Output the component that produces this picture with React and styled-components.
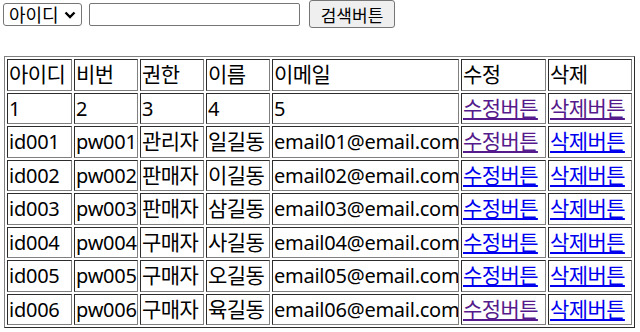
import styled, { createGlobalStyle } from 'styled-components';

const GlobalStyle = createGlobalStyle`
  html, body {
    margin: 0;
    padding: 0;
    background: #fff;
  }
  body {
    font-family: "Noto Sans", "Noto Sans CJK KR", sans-serif;
    color: #000;
  }
`;

const Page = styled.div`
  padding: 0 0 0 3px;
`;

const SearchBar = styled.form`
  display: flex;
  align-items: center;
  height: 28px;
  margin: 0;
`;

const SelectBox = styled.div`
  position: relative;
  width: 79px;
  height: 23px;
  margin: 1px 7px 0 0;
`;

const Select = styled.select`
  appearance: none;
  box-sizing: border-box;
  width: 100%;
  height: 100%;
  margin: 0;
  padding: 0 0 0 5px;
  font-family: "Noto Sans CJK KR", sans-serif;
  font-size: 18px;
  line-height: 21px;
  border: 1px solid #767676;
  border-radius: 3px;
  background: #fff;
  color: #000;
`;

const Chevron = styled.svg`
  position: absolute;
  right: 6px;
  top: 8px;
  pointer-events: none;
`;

const Input = styled.input`
  box-sizing: border-box;
  width: 211px;
  height: 23px;
  margin: 1px 9px 0 0;
  padding: 1px 3px;
  font-size: 16.5px;
  border: 1px solid #767676;
  border-radius: 2px;
`;

const Button = styled.button`
  box-sizing: border-box;
  width: 86px;
  height: 28px;
  padding: 0;
  font-family: "Noto Sans CJK KR", sans-serif;
  font-size: 17px;
  color: #000;
  background: #efefef;
  border: 1px solid #767676;
  border-radius: 3px;
`;

const Table = styled.table`
  margin-top: 28px;
  margin-left: 1px;
  width: 630px;
  table-layout: fixed;
  border: 1px outset #808080;
  border-spacing: 2px;
  font-size: 20px;
`;

const Cell = styled.td`
  box-sizing: border-box;
  height: 31.5px;
  padding: 0 1px;
  border: 1px inset #808080;
  line-height: 29px;
  white-space: nowrap;
  overflow: hidden;
  vertical-align: middle;
  font-size: ${(p) => (p.$ko ? '21px' : '20px')};
  letter-spacing: ${(p) => (p.$ko ? '-0.6px' : '-0.25px')};
`;

const Link = styled.a`
  color: ${(p) => (p.$visited ? '#551a8b' : '#0000ee')};
  text-decoration: underline;
  cursor: pointer;
`;

const widths = [65, 64, 64, 64, 187, 85, 84];
const header = ['아이디', '비번', '권한', '이름', '이메일', '수정', '삭제'];

const rows = [
  { cells: ['1', '2', '3', '4', '5'], edit: true, del: true },
  { cells: ['id001', 'pw001', '관리자', '일길동', 'email01@email.com'], edit: true, del: false },
  { cells: ['id002', 'pw002', '판매자', '이길동', 'email02@email.com'], edit: false, del: false },
  { cells: ['id003', 'pw003', '판매자', '삼길동', 'email03@email.com'], edit: false, del: false },
  { cells: ['id004', 'pw004', '구매자', '사길동', 'email04@email.com'], edit: false, del: false },
  { cells: ['id005', 'pw005', '구매자', '오길동', 'email05@email.com'], edit: false, del: false },
  { cells: ['id006', 'pw006', '구매자', '육길동', 'email06@email.com'], edit: true, del: false },
];

const isKorean = (s) => /[\uac00-\ud7a3]/.test(s);

export default function App() {
  return (
    <Page>
      <GlobalStyle />
      <SearchBar onSubmit={(e) => e.preventDefault()}>
        <SelectBox>
          <Select defaultValue="id">
            <option value="id">아이디</option>
            <option value="name">이름</option>
          </Select>
          <Chevron width="12" height="8" viewBox="0 0 12 8">
            <path d="M1.5 1.5 L6 6 L10.5 1.5" fill="none" stroke="#000" strokeWidth="2.4" />
          </Chevron>
        </SelectBox>
        <Input type="text" />
        <Button type="submit">검색버튼</Button>
      </SearchBar>

      <Table>
        <colgroup>
          {widths.map((w, i) => (
            <col key={i} style={{ width: w }} />
          ))}
        </colgroup>
        <tbody>
          <tr>
            {header.map((h) => (
              <Cell key={h} $ko>
                {h}
              </Cell>
            ))}
          </tr>
          {rows.map((r, i) => (
            <tr key={i}>
              {r.cells.map((c, j) => (
                <Cell key={j} $ko={isKorean(c)}>
                  {c}
                </Cell>
              ))}
              <Cell $ko>
                <Link $visited={r.edit}>수정버튼</Link>
              </Cell>
              <Cell $ko>
                <Link $visited={r.del}>삭제버튼</Link>
              </Cell>
            </tr>
          ))}
        </tbody>
      </Table>
    </Page>
  );
}
